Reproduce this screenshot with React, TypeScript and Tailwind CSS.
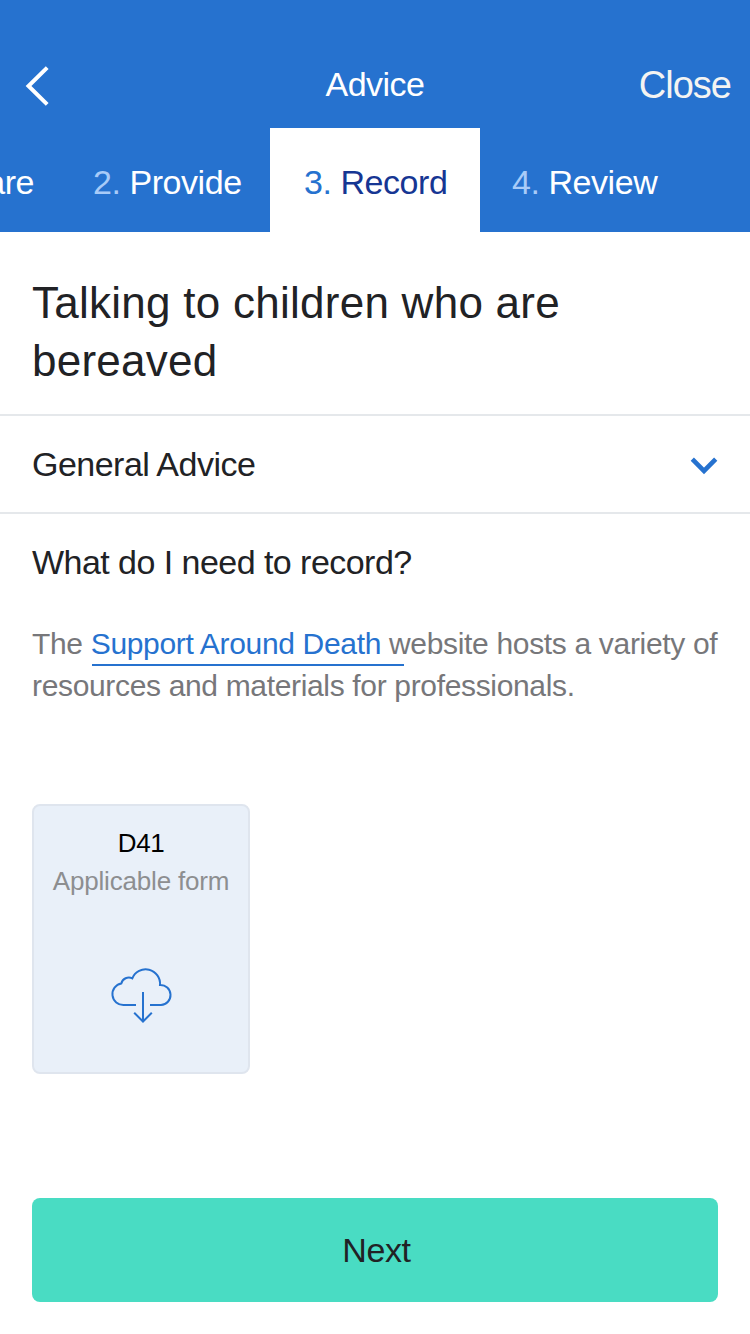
export default function App() {
  return (
    <div className="flex h-[1334px] w-[750px] flex-col overflow-hidden bg-white font-['Liberation_Sans',Arial,sans-serif] text-[#212225]">
      <header className="h-[232px] bg-[#2672cf] pt-[42px] text-white">
        <div className="grid h-[86px] grid-cols-[1fr_110px_1fr] items-center">
          <svg className="mt-px ml-[25px] h-10 w-6" viewBox="0 0 24 40" fill="none" stroke="currentColor" strokeWidth="4"><path d="M22.200 1.600 3.500 20 22.200 38.400" /></svg>
          <h1 className="-mt-[2px] text-center text-[34px] tracking-[-0.5px]">Advice</h1>
          <button className="pr-[19px] text-right text-[38px] tracking-[-1px] text-[#f4f4f2]">Close</button>
        </div>
        <nav className="flex h-[104px] whitespace-nowrap text-[34px] leading-[108px] tracking-[-0.45px]">
          <div className="flex w-[65px] shrink-0 justify-end pr-[31px]"><span>are</span></div>
          <div className="w-[205px] pl-[28px]"><span className="text-[#a8cbf8]">2.</span> Provide</div>
          <div className="w-[210px] bg-white pl-[34px] text-[#163693]"><span className="text-[#2672cf]">3.</span> Record</div>
          <div className="pl-[32px]"><span className="text-[#a8cbf8]">4.</span> Review</div>
        </nav>
      </header>
      <h2 className="h-[184px] border-b-2 border-[#e5e8eb] px-8 pt-[42px] text-[44px] leading-[58px] tracking-[0.26px]">Talking to children who are<br />bereaved</h2>
      <div className="flex h-[98px] items-center justify-between border-b-2 border-[#e5e8eb] px-8 text-[34px] tracking-[-0.52px]">
        <span>General Advice</span>
        <svg className="mt-1 h-[18px] w-7" viewBox="0 0 28 18" fill="none" stroke="#2672cf" strokeWidth="4.6"><path d="M2.300 2.200 14 13.900 25.700 2.200" /></svg>
      </div>
      <main className="px-8 pt-[28px]">
        <h3 className="text-[34px] leading-[40px] tracking-[-0.54px]">What do I need to record?</h3>
        <p className="mt-[41px] text-[30px] leading-[42px] tracking-[-0.33px] whitespace-nowrap text-[#77777a]">
          The{' '}
          <a className="relative text-[#2672cf]">
            Support Around Death{' '}
            <span className="absolute bottom-[-6px] left-px h-[2px] w-[312px] bg-[#2672cf]" />
          </a>
          website hosts a variety of<br />
          <span className="tracking-[-0.34px]">resources and materials for professionals.</span>
        </p>
        <div className="mt-[97px] flex h-[270px] w-[218px] flex-col items-center rounded-lg border-2 border-[#dfe5ee] bg-[#e9f0f9] pt-[18px]">
          <div className="text-[26px] leading-[38px] tracking-[-0.4px] text-black">D41</div>
          <div className="text-[26px] leading-[38px] tracking-[-0.18px] text-[#8d8e90]">Applicable form</div>
          <svg className="mt-[66px] ml-[2px] h-[60px] w-[64px]" viewBox="0 0 64 60" fill="none" stroke="#2672cf" strokeWidth="2">
            <path d="M26 39H13.800A10.900 10.900 0 0 1 11.300 17.400A7.800 7.800 0 0 1 22.300 12.300A14.400 14.400 0 0 1 50 19A10 10 0 1 1 51 39H40" />
            <path d="M33 26V55.500M24.200 46.800 33 55.500 41.800 46.800" />
          </svg>
        </div>
      </main>
      <button className="mx-8 mt-[124px] h-[104px] rounded-lg bg-[#49dcc3] pl-[3px] text-[34px] tracking-[-0.4px]">Next</button>
    </div>
  );
}
